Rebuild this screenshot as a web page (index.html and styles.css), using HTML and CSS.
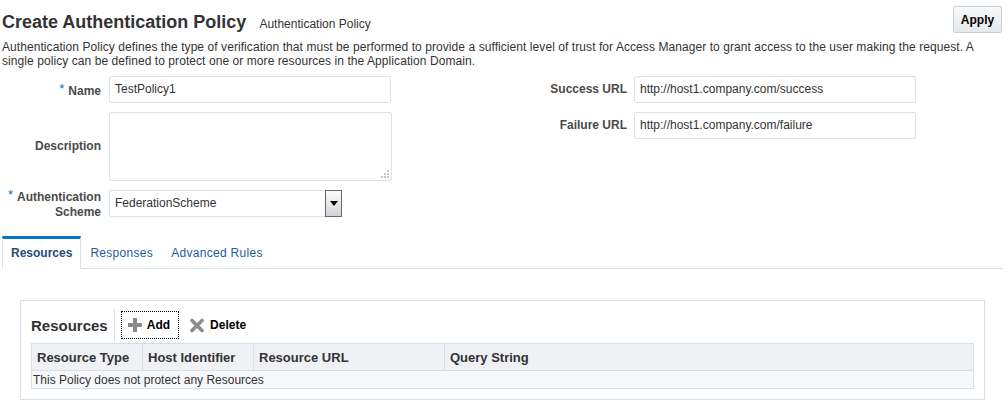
FILE: index.html
```html
<!DOCTYPE html>
<html>
<head>
<meta charset="utf-8">
<title>Create Authentication Policy</title>
<link rel="stylesheet" href="styles.css">
</head>
<body>
<div class="page">
  <div class="header">
    <div class="titles">
      <h1 class="title">Create Authentication Policy</h1>
      <span class="subtitle">Authentication Policy</span>
    </div>
    <button class="apply">Apply</button>
  </div>
  <p class="intro">Authentication Policy defines the type of verification that must be performed to provide a sufficient level of trust for Access Manager to grant access to the user making the request. A single policy can be defined to protect one or more resources in the Application Domain.</p>

  <div class="form">
    <div class="col col-left">
      <div class="row">
        <label class="lbl"><span class="req">*</span>Name</label>
        <div class="field">TestPolicy1</div>
      </div>
      <div class="row">
        <label class="lbl">Description</label>
        <div class="field area">
          <svg class="grip" width="10" height="10" viewBox="0 0 10 10">
            <rect x="7" y="1" width="2" height="2" fill="#c8c8c8"/>
            <rect x="4" y="4" width="2" height="2" fill="#c8c8c8"/>
            <rect x="7" y="4" width="2" height="2" fill="#c8c8c8"/>
            <rect x="1" y="7" width="2" height="2" fill="#c8c8c8"/>
            <rect x="4" y="7" width="2" height="2" fill="#c8c8c8"/>
            <rect x="7" y="7" width="2" height="2" fill="#c8c8c8"/>
          </svg>
        </div>
      </div>
      <div class="row fixed">
        <label class="lbl"><span class="req">*</span>Authentication Scheme</label>
        <div class="select">
          <span class="select-text">FederationScheme</span>
          <span class="select-btn">
            <svg width="8" height="5" viewBox="0 0 8 5"><path d="M0 0H8L4 5Z" fill="#000"/></svg>
          </span>
        </div>
      </div>
    </div>
    <div class="col col-right">
      <div class="row">
        <label class="lbl">Success URL</label>
        <div class="field">http://host1.company.com/success</div>
      </div>
      <div class="row">
        <label class="lbl">Failure URL</label>
        <div class="field">http://host1.company.com/failure</div>
      </div>
    </div>
  </div>

  <div class="tabs">
    <span class="tab active">Resources</span>
    <span class="tab">Responses</span>
    <span class="tab">Advanced Rules</span>
  </div>

  <div class="panel">
    <div class="toolbar">
      <span class="panel-title">Resources</span>
      <span class="sep"></span>
      <span class="tbtn focus">
        <svg width="14" height="14" viewBox="0 0 14 14"><rect x="5" y="0" width="4" height="14" fill="#8a8a8a"/><rect x="0" y="5" width="14" height="4" fill="#8a8a8a"/></svg>
        Add
      </span>
      <span class="tbtn">
        <svg width="14" height="15" viewBox="0 0 14 15"><path d="M2 2.5L12 12.5M12 2.5L2 12.5" stroke="#8d8d8d" stroke-width="3.6" stroke-linecap="round"/></svg>
        Delete
      </span>
    </div>
    <table class="grid">
      <thead>
        <tr>
          <th class="c1">Resource Type</th>
          <th class="c2">Host Identifier</th>
          <th class="c3">Resource URL</th>
          <th class="c4">Query String</th>
        </tr>
      </thead>
      <tbody>
        <tr><td colspan="4">This Policy does not protect any Resources</td></tr>
      </tbody>
    </table>
  </div>
</div>
</body>
</html>
```

FILE: styles.css
```css
* { box-sizing: border-box; }

body {
  margin: 0;
  background: #ffffff;
  font-family: "Liberation Sans", Arial, sans-serif;
  font-size: 12px;
  color: #333333;
}

.page {
  padding: 6px 5px 0 2px;
}

.header {
  display: flex;
  align-items: flex-end;
  height: 27px;
}

.titles {
  display: flex;
  align-items: baseline;
}

.title {
  margin: 0;
  font-size: 18px;
  line-height: 21px;
  font-weight: bold;
  color: #333333;
}

.subtitle {
  margin-left: 13px;
  font-size: 12px;
  color: #333333;
}

.apply {
  margin-left: auto;
  margin-right: 1px;
  width: 49px;
  height: 27px;
  padding: 0;
  border: 1px solid #c9d1d9;
  border-radius: 2px;
  background: linear-gradient(#f7f8f9, #e6e9ec);
  font-family: "Liberation Sans", Arial, sans-serif;
  font-size: 12px;
  font-weight: bold;
  color: #000000;
}

.intro {
  margin: 7px 0 0 0;
  width: 1000px;
  line-height: 14px;
  letter-spacing: 0.07px;
  color: #333333;
}

.form {
  display: flex;
  margin-top: 8px;
}

.col {
  display: flex;
  flex-direction: column;
  gap: 9px;
}

.col-left { width: 498px; }

.row {
  display: flex;
  align-items: center;
}

.row.fixed { height: 27px; }

.lbl {
  text-align: right;
  font-weight: bold;
  line-height: 15px;
  color: #4a4a4a;
}

.col-left .lbl { width: 99px; margin-right: 8px; }
.col-right .lbl { width: 127px; margin-right: 7px; }

.req {
  color: #0a6fc2;
  font-weight: normal;
  font-size: 13px;
  vertical-align: 2px;
  margin-right: 4px;
}

.field {
  width: 282px;
  height: 27px;
  border: 1px solid #dce2e7;
  border-radius: 2px;
  background: #ffffff;
  padding-left: 5px;
  line-height: 25px;
  color: #333333;
}

.field.area {
  width: 283px;
  height: 69px;
  position: relative;
}

.grip {
  position: absolute;
  right: 1px;
  bottom: 1px;
}

.select {
  display: flex;
  width: 233px;
  height: 27px;
}

.select-text {
  flex: 1;
  border: 1px solid #dce2e7;
  border-right: none;
  border-radius: 2px 0 0 2px;
  padding-left: 5px;
  line-height: 25px;
}

.select-btn {
  width: 17px;
  height: 27px;
  border: 1px solid #5f6a75;
  background: linear-gradient(#fbfbfb, #d2d3d4);
  display: flex;
  align-items: center;
  justify-content: center;
}

.tabs {
  display: flex;
  margin-top: 19px;
  height: 33px;
  border-bottom: 1px solid #d6dfe6;
}

.tab {
  padding: 3px 9px 0 9px;
  line-height: 29px;
  letter-spacing: 0.3px;
  color: #1b5ca6;
}

.tab.active {
  border: 1px solid #d6dfe6;
  border-top: 3px solid #0572ce;
  border-bottom: 1px solid #ffffff;
  margin-bottom: -1px;
  padding: 0 8px;
  background: #ffffff;
  font-weight: bold;
  letter-spacing: 0;
  color: #294a7b;
}

.panel {
  margin: 31px 0 0 18px;
  width: 965px;
  border: 1px solid #d6dfe6;
  padding: 8px 10px 10px 10px;
}

.toolbar {
  display: flex;
  align-items: center;
  height: 32px;
  margin-bottom: 2px;
}

.panel-title {
  font-size: 15px;
  font-weight: bold;
  color: #333333;
}

.sep {
  width: 1px;
  height: 32px;
  background: #d6dfe6;
  margin: 0 6px 0 6px;
}

.tbtn {
  display: flex;
  align-items: center;
  gap: 5px;
  height: 28px;
  padding: 0 8px 0 6px;
  border: 1px dotted transparent;
  font-weight: bold;
  color: #000000;
}

.tbtn.focus { border-color: #000000; }

.tbtn + .tbtn { margin-left: 4px; gap: 6px; }

.grid {
  width: 100%;
  border-collapse: collapse;
  border: 1px solid #d6dfe6;
}

.grid th {
  height: 27px;
  padding: 0 0 0 5px;
  text-align: left;
  font-size: 13px;
  font-weight: bold;
  color: #333333;
  background: #f0f1f5;
  border: 1px solid #d6dfe6;
}

.c1 { width: 111px; }
.c2 { width: 111px; }
.c3 { width: 191px; }

.grid td {
  height: 18px;
  padding: 0 0 0 1px;
  line-height: 16px;
  background: #f7f8fb;
  color: #333333;
}
```
